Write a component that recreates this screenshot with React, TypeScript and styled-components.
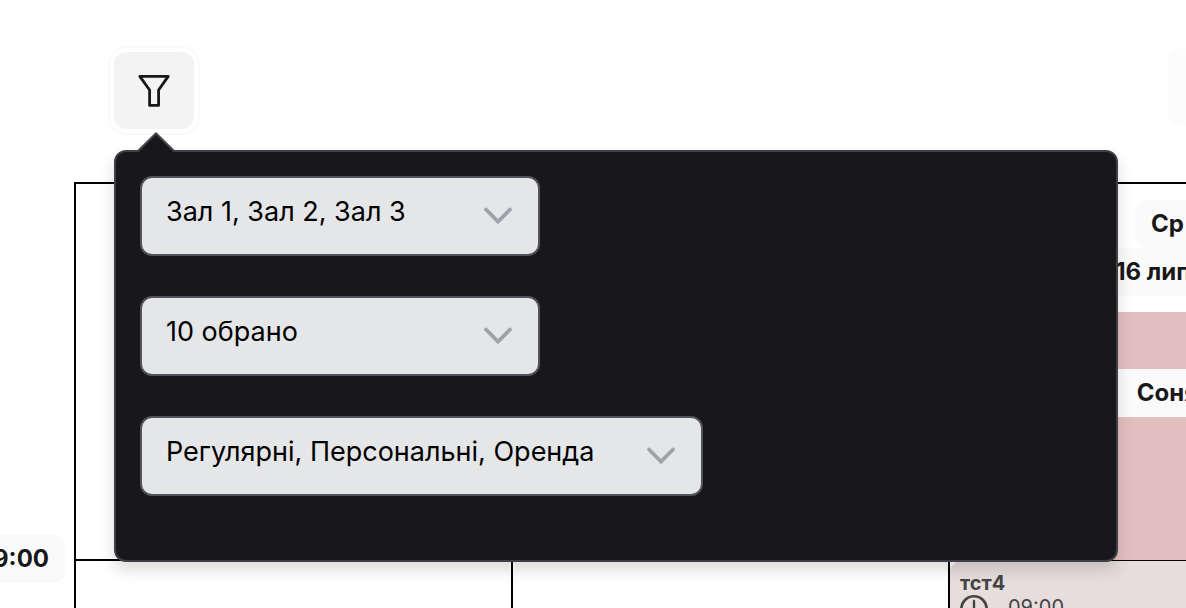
import React from "react";
import styled, { createGlobalStyle } from "styled-components";

const GlobalStyle = createGlobalStyle`
  *, *::before, *::after { box-sizing: border-box; }
  body {
    margin: 0;
    background: #fff;
    color: #18181b;
    font-family: Inter, "Liberation Sans", sans-serif;
  }
`;

const Page = styled.main`
  display: flex;
  flex-direction: column;
  height: 100vh;
  overflow: hidden;
`;

const Toolbar = styled.header`
  display: flex;
  flex: none;
  justify-content: space-between;
  height: 80px;
  margin: 49px -62px 53px 114px;
`;

const FilterAnchor = styled.div`
  display: flex;
  align-items: flex-end;
`;

const ToolButton = styled.button<{ $active?: boolean }>`
  display: flex;
  align-items: center;
  justify-content: center;
  width: 80px;
  height: 77px;
  padding: 0;
  border: 0;
  border-radius: 12px;
  background: ${(p) => (p.$active ? "#f3f3f3" : "#fcfcfc")};
  box-shadow: ${(p) => (p.$active ? "0 0 0 4px #fff, 0 0 0 6px #fafafa" : "none")};
  color: #18181b;
`;

const Popover = styled.section`
  position: absolute;
  z-index: 2;
  top: 150px;
  left: 114px;
  right: 68px;
  display: flex;
  flex-direction: column;
  align-items: flex-start;
  gap: 40px;
  padding: 24px 24px 64px;
  border: 2px solid #3f3f46;
  border-radius: 12px;
  background: #18181b;
  box-shadow: 0 8px 16px rgba(0, 0, 0, 0.14);
`;

const PopoverArrow = styled.svg`
  position: absolute;
  top: -20px;
  left: 20px;
`;

const Field = styled.div<{ $width: number }>`
  position: relative;
  width: ${(p) => p.$width}px;
  max-width: 100%;
`;

const Select = styled.select`
  display: block;
  appearance: none;
  width: 100%;
  height: 80px;
  padding: 0 64px 8px 24px;
  border: 2px solid #52525b;
  border-radius: 12px;
  background: #e5e6e8;
  color: #000;
  font-family: inherit;
  font-size: 27px;
  line-height: 40px;
`;

const Chevron = styled.svg`
  position: absolute;
  top: 24px;
  right: 22px;
  pointer-events: none;
`;

const Calendar = styled.section`
  display: grid;
  flex: none;
  grid-template-columns: 74px repeat(3, minmax(437px, 1fr));
  grid-template-rows: 377px 377px;
`;

const Cell = styled.div`
  display: flex;
  flex-direction: column;
  min-width: 0;
  border-top: 2px solid #000;
  border-left: 2px solid #000;
`;

const DayCell = styled(Cell)`
  position: relative;
  align-items: center;
  padding-top: 16px;
`;

const TimeCell = styled.div`
  display: flex;
  justify-content: flex-end;
  align-items: flex-start;
  padding-right: 9px;
`;

const Tag = styled.span`
  padding: 0 16px;
  border-radius: 12px;
  background: #fafafa;
  font-size: 24px;
  font-weight: 700;
  line-height: 48px;
  white-space: nowrap;
`;

const TimeTag = styled(Tag)`
  margin-top: -24px;
`;

const RoomEvent = styled.div`
  z-index: 1;
  flex: 1;
  width: 100%;
  margin-top: 16px;
  margin-bottom: -1px;
  padding-top: 57px;
  background: #e2bfbe;
`;

const RoomName = styled.div`
  background: #fafafa;
  font-size: 24px;
  font-weight: 700;
  line-height: 48px;
  text-align: center;
`;

const Lesson = styled.article`
  flex: 1;
  padding: 10px;
  border-radius: 12px 0 0 0;
  background: #e8dddd;
  color: #444;
  font-size: 20px;
  line-height: 24px;
`;

const LessonTitle = styled.h3`
  margin: 0;
  font-size: 20px;
  font-weight: 700;
`;

const LessonTime = styled.div`
  display: flex;
  align-items: flex-start;
  gap: 20px;
`;

type FilterFieldProps = { label: string; value: string; width: number };

function FilterField({ label, value, width }: FilterFieldProps) {
  return (
    <Field $width={width}>
      <Select aria-label={label} defaultValue={value}>
        <option>{value}</option>
      </Select>
      <Chevron width="40" height="32" viewBox="0 0 40 32" fill="none" aria-hidden="true">
        <path d="M8 9.5 20 21.5 32 9.5" stroke="#a1a1aa" strokeWidth="3.8" strokeLinecap="round" />
      </Chevron>
    </Field>
  );
}

export default function App() {
  return (
    <>
      <GlobalStyle />
      <Page>
        <Toolbar>
          <FilterAnchor>
            <ToolButton $active aria-label="Фільтр" aria-expanded="true">
              <svg width="40" height="40" viewBox="0 0 40 40" fill="none" aria-hidden="true">
                <path
                  d="M5.8 5.4H34.2L24.6 19V34.4H15.6V19Z"
                  stroke="currentColor"
                  strokeWidth="2.8"
                  strokeLinejoin="round"
                />
              </svg>
            </ToolButton>
          </FilterAnchor>
          <ToolButton aria-label="Далі" />
        </Toolbar>

        <Popover>
          <PopoverArrow width="40" height="22" viewBox="0 0 40 22" aria-hidden="true">
            <path d="M1 21 20 2 39 21V22H1Z" fill="#18181b" />
            <path d="M1.5 19.5 20 1.5 38.5 19.5" fill="none" stroke="#3f3f46" strokeWidth="2" />
          </PopoverArrow>
          <FilterField label="Зали" value="Зал 1, Зал 2, Зал 3" width={400} />
          <FilterField label="Тренери" value="10 обрано" width={400} />
          <FilterField label="Тип" value="Регулярні, Персональні, Оренда" width={563} />
        </Popover>

        <Calendar>
          <TimeCell />
          <Cell />
          <Cell />
          <DayCell>
            <Tag>Ср</Tag>
            <Tag>16 липня</Tag>
            <RoomEvent>
              <RoomName>Соня</RoomName>
            </RoomEvent>
          </DayCell>
          <TimeCell>
            <TimeTag>09:00</TimeTag>
          </TimeCell>
          <Cell />
          <Cell />
          <Cell>
            <Lesson>
              <LessonTitle>тст4</LessonTitle>
              <LessonTime>
                <svg width="28" height="28" viewBox="0 0 28 28" fill="none" aria-hidden="true">
                  <circle cx="14" cy="14" r="12.7" stroke="currentColor" strokeWidth="2.6" />
                  <path d="M14 6V14L19 17" stroke="currentColor" strokeWidth="2.4" strokeLinecap="round" />
                </svg>
                <span>09:00</span>
              </LessonTime>
            </Lesson>
          </Cell>
        </Calendar>
      </Page>
    </>
  );
}
